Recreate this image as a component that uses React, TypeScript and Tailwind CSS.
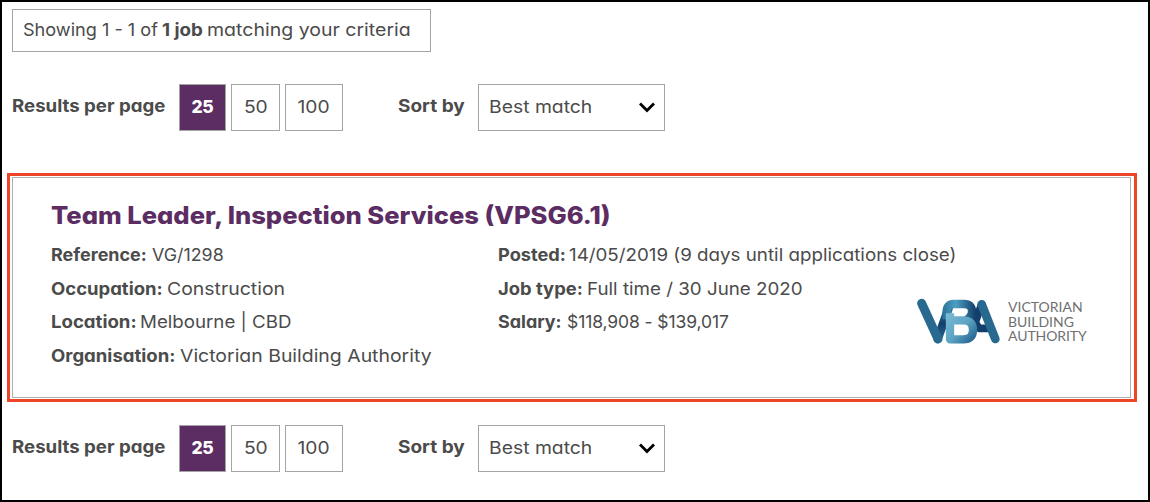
import type { ReactNode } from "react";

function ResultsBar() {
  return (
    <div className="flex h-[47px] items-stretch">
      <div className="w-[167px] pt-[9px] font-bold leading-[25px]">
        <span className="inline-block origin-left scale-x-[1.066]">Results per page</span>
      </div>
      <div className="flex gap-[5px]">
        <button className="w-[47px] border border-[#a5a5a5] bg-[#5b2d62] text-center font-extrabold tracking-[-0.4px] text-white">25</button>
        <button className="w-[49px] border border-[#a5a5a5] text-center">
          <span className="inline-block scale-x-[1.1]">50</span>
        </button>
        <button className="w-[58px] border border-[#a5a5a5] text-center">
          <span className="inline-block scale-x-[1.1]">100</span>
        </button>
      </div>
      <div className="ml-[55px] w-[80px] pt-[9px] font-bold leading-[25px]">
        <span className="inline-block origin-left scale-x-[1.085]">Sort by</span>
      </div>
      <div className="flex w-[187px] items-center justify-between border border-[#a5a5a5] pl-[10px] pr-[8px]">
        <span className="inline-block origin-left scale-x-[1.105]">Best match</span>
        <svg width="18" height="12" viewBox="0 0 18 12" fill="none" stroke="#000" strokeWidth="2.8">
          <path d="M2 1.5 L9 8.5 L16 1.5" />
        </svg>
      </div>
    </div>
  );
}

function Field({ children }: { children: ReactNode }) {
  return <div className="flex h-[33.5px] items-center whitespace-nowrap">{children}</div>;
}

function Logo() {
  return (
    <svg width="88" height="48" viewBox="9 6 264 144" fill="none" strokeLinecap="round" strokeLinejoin="round">
      <defs>
        <linearGradient id="v-right" x1="0" y1="1" x2="0" y2="0">
          <stop offset="0" stopColor="#266690" />
          <stop offset="0.5" stopColor="#123f6b" />
          <stop offset="1" stopColor="#2f7da3" />
        </linearGradient>
        <linearGradient id="b-top" x1="85" y1="0" x2="185" y2="0" gradientUnits="userSpaceOnUse">
          <stop offset="0" stopColor="#2b7298" />
          <stop offset="0.4" stopColor="#4d9fc1" />
          <stop offset="1" stopColor="#123f6b" />
        </linearGradient>
        <linearGradient id="b-bottom" x1="100" y1="60" x2="185" y2="140" gradientUnits="userSpaceOnUse">
          <stop offset="0" stopColor="#78b9d4" />
          <stop offset="0.5" stopColor="#5ba2c3" />
          <stop offset="1" stopColor="#1c5a86" />
        </linearGradient>
      </defs>
      <path d="M71 129 L104 36" stroke="url(#v-right)" strokeWidth="26" />
      <path d="M23 22 L72 129" stroke="#28698f" strokeWidth="27" />
      <path d="M203 25 L184 78 L194 97 H226" stroke="#123f6b" strokeWidth="23" />
      <path d="M203 25 L244 129" stroke="#28698f" strokeWidth="26" />
      <path d="M98 70 V46 Q98 24 120 24 H150 Q174 24 174 46 Q174 64 156 72" stroke="url(#b-top)" strokeWidth="25" strokeLinecap="butt" />
      <path d="M108 52 V130 H148 Q177 130 177 102 Q177 73 148 73 H112" stroke="url(#b-bottom)" strokeWidth="25" strokeLinecap="butt" />
    </svg>
  );
}

export default function App() {
  return (
    <div className="h-[502px] w-[1150px] overflow-hidden border-2 border-black bg-white font-['Inter',sans-serif] text-[17.5px] text-[#4b4b4b] [font-feature-settings:'cv11']">
      <div className="ml-[10px] mt-[7px] flex h-[43px] w-[419px] items-center whitespace-nowrap border border-[#a5a5a5] pl-[10px]">
        <span className="w-[139px] origin-left scale-x-[1.035]">Showing 1 - 1 of</span>
        <span className="w-[45px] origin-left scale-x-[1.07] font-bold">1 job</span>
        <span className="origin-left scale-x-[1.115]">matching your criteria</span>
      </div>
      <div className="ml-[10px] mt-[32px]">
        <ResultsBar />
      </div>
      <div className="ml-[5px] mt-[42px] h-[229px] w-[1130px] border-[3px] border-[#ee4529] p-[1px_2px]">
        <div className="flex h-[221px] w-[1119px] border border-[#b0b0b0] pl-[38px]">
          <div className="flex flex-col">
            <h2 className="mt-[20px] h-[40.4px] w-[530px] origin-left scale-x-[1.065] whitespace-nowrap text-[24px] font-extrabold leading-[36px] text-[#5b2d62]">Team Leader, Inspection Services (VPSG6.1)</h2>
            <div className="flex">
              <div className="w-[447px]">
                <Field>
                  <span className="w-[101px] origin-left scale-x-[1.027] font-bold">Reference:</span>
                  <span className="origin-left scale-x-[1.02]">VG/1298</span>
                </Field>
                <Field>
                  <span className="w-[116px] origin-left scale-x-[1.057] font-bold">Occupation:</span>
                  <span className="origin-left scale-x-[1.11]">Construction</span>
                </Field>
                <Field>
                  <span className="w-[89px] origin-left scale-x-[1.063] font-bold">Location:</span>
                  <span className="origin-left scale-x-[1.068]">Melbourne | CBD</span>
                </Field>
                <Field>
                  <span className="w-[129px] origin-left scale-x-[1.06] font-bold">Organisation:</span>
                  <span className="origin-left scale-x-[1.11]">Victorian Building Authority</span>
                </Field>
              </div>
              <div className="w-[419px]">
                <Field>
                  <span className="w-[71px] shrink-0 origin-left scale-x-[1.04] font-bold">Posted:</span>
                  <span className="shrink-0 origin-left scale-x-[1.072]">14/05/2019 (9 days until applications close)</span>
                </Field>
                <Field>
                  <span className="w-[89px] origin-left scale-x-[1.05] font-bold">Job type:</span>
                  <span className="origin-left scale-x-[1.072]">Full time / 30 June 2020</span>
                </Field>
                <Field>
                  <span className="w-[69px] origin-left scale-x-[1.025] font-bold">Salary:</span>
                  <span className="tracking-[-0.1px]">$118,908 - $139,017</span>
                </Field>
              </div>
              <div className="mt-[60px] flex">
                <Logo />
                <div className="ml-[3px] mt-[2px] whitespace-nowrap font-['Lato'] text-[14px] leading-[14.5px] text-[#6f7072]">
                  <div>VICTORIAN</div>
                  <div>BUILDING</div>
                  <div className="tracking-[-0.08px]">AUTHORITY</div>
                </div>
              </div>
            </div>
          </div>
        </div>
      </div>
      <div className="ml-[10px] mt-[23px]">
        <ResultsBar />
      </div>
    </div>
  );
}
